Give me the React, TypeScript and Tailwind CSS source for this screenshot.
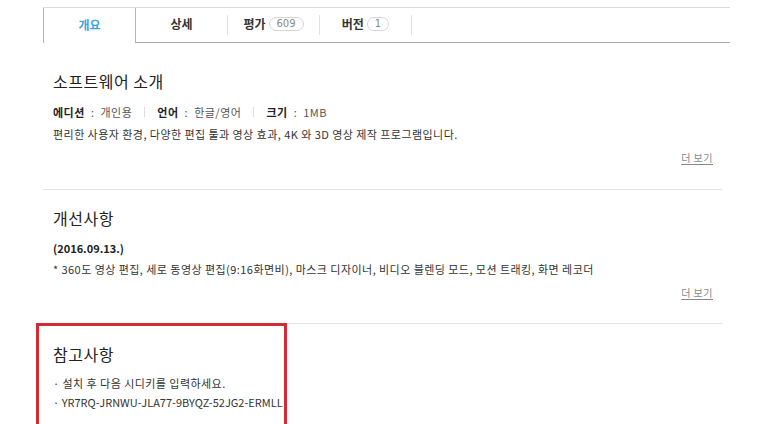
import React from 'react';

const FONT = '"Noto Sans CJK KR", "Liberation Sans", sans-serif';

interface Tab {
  label: string;
  count?: number;
}

const tabs: Tab[] = [
  { label: '개요' },
  { label: '상세' },
  { label: '평가', count: 609 },
  { label: '버전', count: 1 },
];

const MoreLink = () => (
  <div className="mt-[8px] flex justify-end pr-[9px]">
    <a className="text-[10px] leading-[16px] tracking-[0.5px] text-[#888] underline underline-offset-2">더 보기</a>
  </div>
);

export default function App() {
  return (
    <div className="min-h-[424px] w-[773px] bg-white pt-[7px] text-[#333]" style={{ fontFamily: FONT }}>
      {/* Tabs */}
      <div className="ml-[43px] flex h-[36px] w-[687px] border-t border-[#dcdcdc]">
        {tabs.map((tab, i) =>
          i === 0 ? (
            <div
              key={tab.label}
              className="flex w-[93px] items-center justify-center border-x border-[#b5b5b5] bg-white pb-[2px] text-[12px] font-bold text-[#3ba4dc]"
            >
              {tab.label}
            </div>
          ) : (
            <div key={tab.label} className="flex w-[92px] items-center border-b border-[#a9a9a9]">
              <div className="flex flex-1 items-center justify-center gap-[3px] pb-[2px] text-[12px] font-bold text-[#333]">
                {tab.label}
                {tab.count !== undefined && (
                  <span
                    className="rounded-full border border-[#d5d5d5] px-[7px] text-[10px] leading-[12px] font-normal text-[#888]"
                    style={{ fontFamily: '"DejaVu Sans", sans-serif' }}
                  >
                    {tab.count}
                  </span>
                )}
              </div>
              <div className="h-[20px] w-px bg-[#e2e2e2]" />
            </div>
          )
        )}
        <div className="flex-1 border-b border-[#a9a9a9]" />
      </div>

      <div className="ml-[43px] w-[679px]">
        {/* 소프트웨어 소개 */}
        <section className="border-b border-[#e3e3e3] pt-[28px] pb-[23px] pl-[10px]">
          <h2 className="text-[16px] leading-[20px] font-normal tracking-[0.5px] text-[#222]">소프트웨어 소개</h2>
          <div className="mt-[13px] flex items-center text-[11px] leading-[16px] tracking-[0.5px] text-[#555]">
            <b className="text-[#222]">에디션</b>
            <span className="mx-[6px]">:</span>개인용
            <span className="mx-[12px] h-[10px] w-px bg-[#ddd]" />
            <b className="text-[#222]">언어</b>
            <span className="mx-[6px]">:</span>한글/영어
            <span className="mx-[12px] h-[10px] w-px bg-[#ddd]" />
            <b className="text-[#222]">크기</b>
            <span className="mx-[6px]">:</span>1MB
          </div>
          <p className="mt-[6px] text-[11px] leading-[16px] tracking-[0.45px] text-[#333]">
            편리한 사용자 환경, 다양한 편집 툴과 영상 효과, 4K 와 3D 영상 제작 프로그램입니다.
          </p>
          <MoreLink />
        </section>

        {/* 개선사항 */}
        <section className="border-b border-[#e3e3e3] pt-[18px] pb-[22px] pl-[10px]">
          <h2 className="text-[16px] leading-[20px] font-normal tracking-[0.5px] text-[#222]">개선사항</h2>
          <p className="mt-[12px] text-[11px] leading-[16px] font-bold text-[#222]">(2016.09.13.)</p>
          <p className="mt-[5px] text-[11px] leading-[16px] tracking-[0.45px] text-[#333]">
            * 360도 영상 편집, 세로 동영상 편집(9:16화면비), 마스크 디자이너, 비디오 블렌딩 모드, 모션 트래킹, 화면 레코더
          </p>
          <MoreLink />
        </section>

        {/* 참고사항 */}
        <section className="relative pt-[20px] pl-[10px]">
          <div className="pointer-events-none absolute top-[-1px] left-[-7px] h-[110px] w-[251px] border-[3px] border-[#d42a33]" />
          <h2 className="text-[16px] leading-[20px] font-normal tracking-[0.5px] text-[#222]">참고사항</h2>
          <p className="mt-[11px] text-[11px] leading-[16px] tracking-[0.45px] text-[#333]">· 설치 후 다음 시디키를 입력하세요.</p>
          <p className="mt-[3px] text-[11px] leading-[16px] text-[#333]">· YR7RQ-JRNWU-JLA77-9BYQZ-52JG2-ERMLL</p>
        </section>
      </div>
    </div>
  );
}
